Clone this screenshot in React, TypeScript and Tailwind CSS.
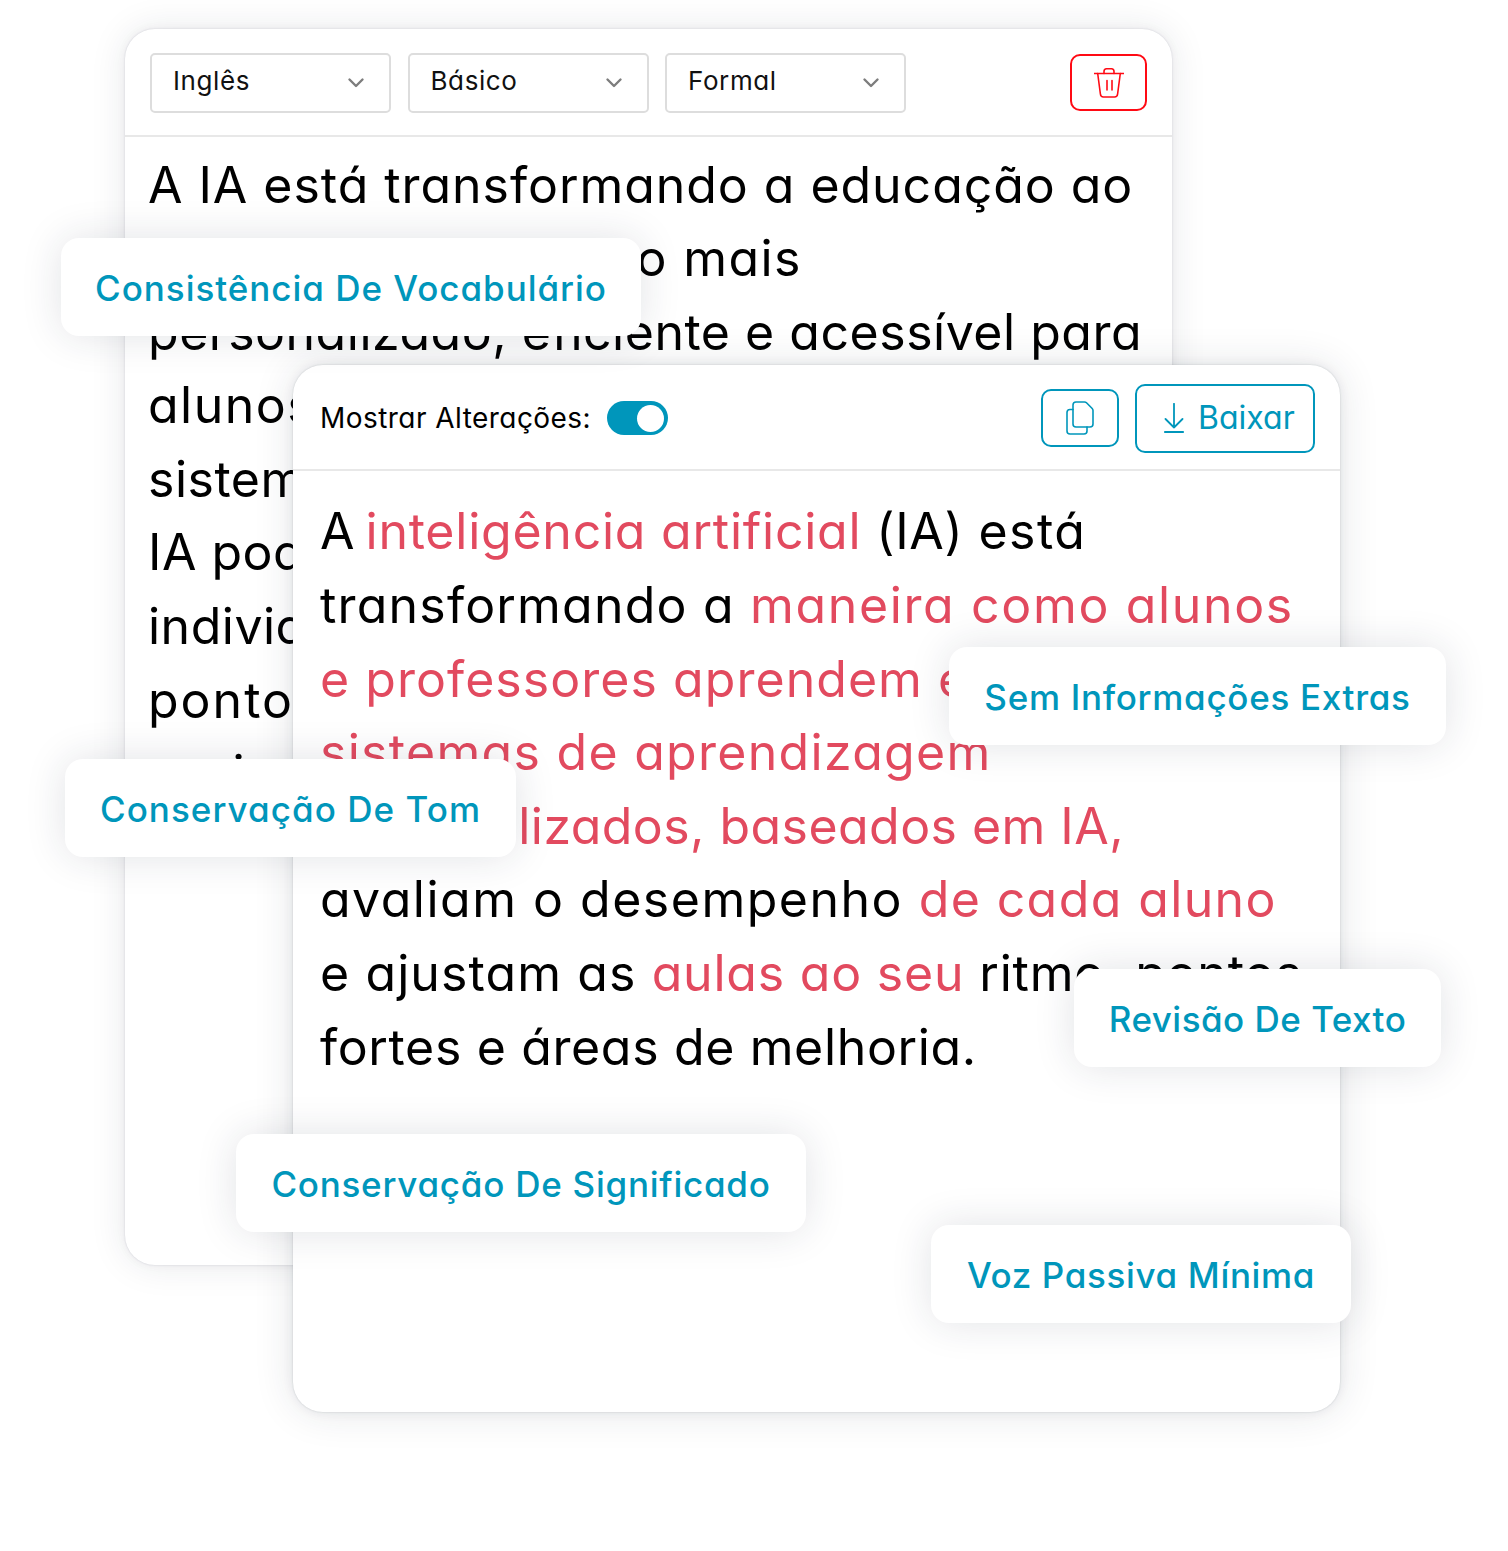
import React from 'react';

const font = "[font-family:Inter,'Liberation_Sans',sans-serif] [font-feature-settings:'cv11']";

const Chevron = () => (
  <svg width="18" height="18" viewBox="0 0 18 18" fill="none" stroke="#7d7d7d" strokeWidth="2.4" strokeLinecap="round" strokeLinejoin="round">
    <path d="M2.500 5.500 9 12l6.500-6.500" />
  </svg>
);

const TrashIcon = () => (
  <svg width="30" height="30" viewBox="0 0 30 30" fill="none" stroke="#ff0a14" strokeWidth="1.6" strokeLinecap="round" strokeLinejoin="round">
    <path d="M.5 5.500h29" />
    <path d="M10 5.500V3.500C10 1.800 11 .8 12.500 .8h5C19 .8 20 1.800 20 3.500v2" />
    <path d="M3.700 5.500 6.400 26c.2 1.900 1.300 3 3 3h11.200c1.700 0 2.800-1.100 3-3l2.700-20.500" />
    <path d="M13 12.500v9.500M18 12.500v9.500" />
  </svg>
);

const CopyIcon = () => (
  <svg width="28" height="34" viewBox="0 0 28 34" fill="none" stroke="#0096bb" strokeWidth="1.6" strokeLinecap="round" strokeLinejoin="round">
    <path d="M10 1h8.500c.8 0 1.500.3 2 .8l5.700 5.700c.5.5.8 1.200.8 2V23a3 3 0 0 1-3 3H10a3 3 0 0 1-3-3V4a3 3 0 0 1 3-3z" />
    <path d="M7 8.500H4a3 3 0 0 0-3 3V30a3 3 0 0 0 3 3h14a3 3 0 0 0 3-3v-4" />
  </svg>
);

const DownloadIcon = () => (
  <svg width="20" height="30" viewBox="0 0 20 30" fill="none" stroke="#0096bb" strokeWidth="1.8" strokeLinecap="round" strokeLinejoin="round">
    <path d="M10 .8v23.700M1.500 16 10 24.500 18.500 16" />
    <path d="M.8 29h18.400" />
  </svg>
);

const Select = ({ label }: { label: string }) => (
  <div className="flex items-center justify-between w-[241px] h-[60px] border-2 border-[#dddddd] rounded-[5px] pl-[21px] pr-[24px]">
    <span className="text-[26px] tracking-[0.6px] text-[#111111] -mt-[5px]">{label}</span>
    <Chevron />
  </div>
);

const Pill = ({ text, className }: { text: string; className: string }) => (
  <div className={`absolute flex items-center justify-center h-[98px] pt-[2px] bg-white rounded-[18px] shadow-[0_0_40px_rgba(30,40,60,0.13)] text-[35px] font-medium text-[#0096bb] whitespace-nowrap ${className}`}>
    {text}
  </div>
);

const Red = ({ children, className }: { children: React.ReactNode; className?: string }) => (
  <span className={`text-[#e24a5f] ${className ?? ''}`}>{children}</span>
);

const backLines = [
  { text: 'A IA está transformando a educação ao', track: 'tracking-[0.96px]' },
  { text: 'tornar este processo mais', track: 'tracking-[1.38px]' },
  { text: 'personalizado, eficiente e acessível para', track: 'tracking-[0.52px]' },
  { text: 'alunos de todos os níveis.', track: 'tracking-[1.5px]' },
  { text: 'sistemas', track: 'tracking-[0.5px]' },
  { text: 'IA podem', track: 'tracking-[0.5px]' },
  { text: 'individuais', track: 'tracking-[0.5px]' },
  { text: 'pontos', track: 'tracking-[2px]' },
  { text: 'ensino.', track: 'tracking-[-0.2px]' },
];

export default function App() {
  return (
    <div className={`relative w-[1508px] h-[1551px] overflow-hidden bg-white ${font}`}>
      {/* Original text */}
      <div className="absolute left-[125px] top-[29px] w-[1047px] h-[1236px] bg-white rounded-[30px] shadow-[0_0_2px_rgba(30,40,60,0.16),0_0_10px_rgba(30,40,60,0.05),0_0_36px_rgba(30,40,60,0.1)] overflow-hidden">
        <div className="flex items-start h-[108px] pl-[25px] pr-[25px] pt-[24px] border-b-2 border-[#e8e8e8]">
          <div className="flex gap-[16.5px]">
            <Select label="Inglês" />
            <Select label="Básico" />
            <Select label="Formal" />
          </div>
          <button className="ml-auto mt-[1px] flex items-center justify-center w-[77px] h-[57px] border-2 border-[#ff0a14] rounded-[10px]">
            <TrashIcon />
          </button>
        </div>
        <div className="pl-[23px] pt-[11.5px] text-[50px] leading-[73.6px] text-black whitespace-nowrap">
          {backLines.map((line) => (
            <div key={line.text} className={line.track}>{line.text}</div>
          ))}
        </div>
      </div>

      {/* Rewritten text */}
      <div className="absolute left-[293px] top-[365px] w-[1047px] h-[1047px] bg-white rounded-[30px] shadow-[0_0_2px_rgba(30,40,60,0.18),0_0_12px_rgba(30,40,60,0.07),0_0_40px_rgba(30,40,60,0.12)] overflow-hidden">
        <div className="flex items-center h-[106px] pl-[27px] pr-[25px] pt-[2px] border-b-2 border-[#e8e8e8]">
          <span className="text-[28px] tracking-[0.45px] text-black">Mostrar Alterações:</span>
          <div className="ml-[16px] flex items-center justify-end w-[61px] h-[34px] rounded-full bg-[#0096bb] pr-[4px]">
            <div className="w-[27px] h-[27px] rounded-full bg-white" />
          </div>
          <div className="ml-auto flex items-center gap-[16px]">
            <button className="flex items-center justify-center w-[78px] h-[58px] border-2 border-[#0096bb] rounded-[10px]">
              <CopyIcon />
            </button>
            <button className="flex items-center gap-[14px] w-[180px] h-[69px] pl-[27px] border-2 border-[#0096bb] rounded-[10px] text-[32px] text-[#0096bb]">
              <DownloadIcon />
              Baixar
            </button>
          </div>
        </div>
        <div className="pl-[27px] pt-[24.4px] text-[50px] leading-[73.6px] text-black whitespace-nowrap">
          <div className="tracking-[0.76px]">
            <span className="tracking-[-1.5px]">A </span>
            <Red>inteligência artificial</Red> (IA) <span className="tracking-[1.5px]">está</span>
          </div>
          <div className="tracking-[1.2px]">transformando a <Red className="tracking-[1.65px]">maneira como alunos</Red></div>
          <div className="tracking-[1.05px]"><Red>e professores aprendem e</Red></div>
          <div className="tracking-[1.3px]"><Red>sistemas de aprendizagem</Red></div>
          <div className="tracking-[0.45px]"><Red>personalizados, baseados em IA,</Red></div>
          <div className="tracking-[1.5px]">avaliam o desempenho <Red className="tracking-[1.4px]">de cada aluno</Red></div>
          <div className="tracking-[1.1px]">e ajustam as <Red className="tracking-[0.8px]">aulas ao seu</Red><span className="tracking-[0.8px]"> ritmo, pontos</span></div>
          <div className="tracking-[0.65px]">fortes e áreas de melhoria.</div>
        </div>
      </div>

      <Pill text="Consistência De Vocabulário" className="left-[61px] top-[238px] w-[580px] tracking-[0.97px]" />
      <Pill text="Sem Informações Extras" className="left-[949px] top-[647px] w-[497px] tracking-[0.7px]" />
      <Pill text="Conservação De Tom" className="left-[65px] top-[759px] w-[451px] tracking-[1.05px]" />
      <Pill text="Revisão De Texto" className="left-[1074px] top-[969px] w-[367px] tracking-[0.48px]" />
      <Pill text="Conservação De Significado" className="left-[236px] top-[1134px] w-[570px] tracking-[0.75px]" />
      <Pill text="Voz Passiva Mínima" className="left-[931px] top-[1225px] w-[420px] tracking-[0.65px]" />
    </div>
  );
}
